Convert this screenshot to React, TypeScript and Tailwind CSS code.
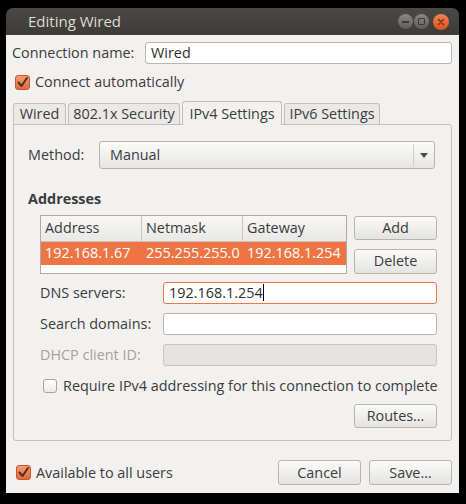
import React from "react";

const font = { fontFamily: '"Open Sans", "DejaVu Sans", sans-serif' };

function Check({ checked }: { checked: boolean }) {
  if (!checked) {
    return (
      <span className="w-[14px] h-[14px] rounded-[3px] border border-[#a8a5a0] bg-gradient-to-b from-[#ffffff] to-[#ecebe9] shrink-0" />
    );
  }
  return (
    <span className="w-[15px] h-[15px] rounded-[3px] border border-[#c4582b] bg-gradient-to-b from-[#f79a6e] to-[#e26a38] shrink-0 flex items-center justify-center">
      <svg width="13" height="13" viewBox="0 0 13 13">
        <path d="M2.5 6.5 L5.5 10 L11 2" fill="none" stroke="#4b3128" strokeWidth="2" strokeLinecap="round" strokeLinejoin="round" />
      </svg>
    </span>
  );
}

function Button({ label, className = "" }: { label: string; className?: string }) {
  return (
    <div
      className={
        "flex items-center justify-center rounded-[3px] border border-[#b8b5b0] bg-gradient-to-b from-[#fbfbfa] to-[#e4e3e1] text-[#3c3c3c] " +
        className
      }
    >
      {label}
    </div>
  );
}

function Field({ value = "", focus = false, disabled = false }: { value?: string; focus?: boolean; disabled?: boolean }) {
  const border = focus ? "border-[#e9794a]" : disabled ? "border-[#c8c5c0]" : "border-[#b9b6b1]";
  const bg = disabled ? "bg-[#e4e3e1]" : "bg-white";
  return (
    <div className={`flex-1 h-[22px] rounded-[3px] border ${border} ${bg} flex items-center px-[5px] text-[#2e2e2e]`}>
      {value}
      {focus && <span className="w-px h-[17px] bg-black" />}
    </div>
  );
}

function Tab({ label, w }: { label: string; w: string }) {
  return (
    <div className={`${w} h-[21px] flex items-center justify-center border border-b-0 border-[#c2bfba] rounded-t-[3px] bg-[#eae9e7]`}>
      {label}
    </div>
  );
}

export default function App() {
  return (
    <div className="w-[466px] h-[504px] bg-black pt-[8px] px-[6px] text-[14.4px] text-[#3c3c3c]" style={font}>
      <div className="w-[453px] h-[485px] rounded-t-[7px] overflow-hidden flex flex-col">
        {/* title bar */}
        <div className="h-[27px] bg-gradient-to-b from-[#4a4945] to-[#3c3b37] flex items-center pl-[22px] pr-[10px]">
          <span className="text-[#dfdbd2] text-[15px]">Editing Wired</span>
          <div className="ml-auto flex items-center gap-[1px]">
            <span className="w-[15px] h-[15px] rounded-full bg-gradient-to-b from-[#8a8882] to-[#5f5d57] flex items-center justify-center">
              <span className="w-[7px] h-[2px] bg-[#3c3b37]" />
            </span>
            <span className="w-[15px] h-[15px] rounded-full bg-gradient-to-b from-[#8a8882] to-[#5f5d57] flex items-center justify-center">
              <span className="w-[7px] h-[7px] border border-[#3c3b37] rounded-[1px]" />
            </span>
            <span className="ml-[3px] w-[16px] h-[16px] rounded-full bg-gradient-to-b from-[#f3834f] to-[#d9521f] flex items-center justify-center">
              <svg width="8" height="8" viewBox="0 0 8 8">
                <path d="M1.5 1.5 L6.5 6.5 M6.5 1.5 L1.5 6.5" stroke="#7a2a0e" strokeWidth="1.4" strokeLinecap="round" />
              </svg>
            </span>
          </div>
        </div>

        {/* content */}
        <div className="flex-1 bg-[#f2f1f0] pl-[6px] pr-[7px] flex flex-col">
          <div className="mt-[7px] h-[22px] flex items-center">
            <span className="w-[133px]">Connection name:</span>
            <Field value="Wired" />
          </div>

          <div className="mt-[10px] h-[16px] flex items-center gap-[5px] pl-[3px]">
            <Check checked />
            <span>Connect automatically</span>
          </div>

          {/* tabs */}
          <div className="mt-[11px] h-[23px] flex items-end pl-[1px] gap-[2px]">
            <Tab label="Wired" w="w-[53px]" />
            <Tab label="802.1x Security" w="w-[112px]" />
            <div className="w-[100px] h-[24px] -mb-px flex items-center justify-center border border-b-0 border-[#c2bfba] rounded-t-[3px] bg-[#f2f1f0] relative z-10">
              IPv4 Settings
            </div>
            <Tab label="IPv6 Settings" w="w-[96px]" />
          </div>

          {/* notebook frame */}
          <div className="ml-[1px] h-[317px] border border-[#c2bfba] rounded-b-[3px] rounded-tr-[3px] bg-[#f2f1f0] pl-[14px] pr-[14px] flex flex-col">
            <div className="mt-[16px] mr-[2px] h-[28px] flex items-center">
              <span className="w-[71px]">Method:</span>
              <div className="flex-1 h-[28px] rounded-[3px] border border-[#b8b5b0] bg-gradient-to-b from-[#fbfbfa] to-[#e6e5e3] flex items-center pl-[10px]">
                <span>Manual</span>
                <span className="ml-auto h-[22px] w-px bg-[#d2cfca]" />
                <span className="w-[20px] flex justify-center">
                  <svg width="8" height="5" viewBox="0 0 8 5">
                    <path d="M0 0 L8 0 L4 5 Z" fill="#4a4a4a" />
                  </svg>
                </span>
              </div>
            </div>

            <div className="mt-[19px] font-bold">Addresses</div>

            <div className="mt-[5px] pl-[12px] flex gap-[7px]">
              <div className="w-[307px] h-[59px] border border-[#aeaba6] bg-white flex flex-col">
                <div className="h-[26px] flex bg-gradient-to-b from-[#f7f7f6] to-[#e9e8e6] border-b border-[#c9c6c1]">
                  <div className="w-[101px] pl-[4px] flex items-center border-r border-[#c9c6c1]">Address</div>
                  <div className="w-[101px] pl-[4px] flex items-center border-r border-[#c9c6c1]">Netmask</div>
                  <div className="flex-1 pl-[4px] flex items-center">Gateway</div>
                </div>
                <div className="h-[23px] flex bg-[#ef7443] text-white">
                  <div className="w-[101px] pl-[4px] flex items-center">192.168.1.67</div>
                  <div className="w-[101px] pl-[4px] flex items-center">255.255.255.0</div>
                  <div className="flex-1 pl-[4px] flex items-center">192.168.1.254</div>
                </div>
              </div>
              <div className="flex flex-col gap-[9px] pt-[1px]">
                <Button label="Add" className="w-[83px] h-[24px]" />
                <Button label="Delete" className="w-[83px] h-[25px]" />
              </div>
            </div>

            <div className="mt-[8px] pl-[12px] flex flex-col gap-[9px]">
              <div className="h-[22px] flex items-center">
                <span className="w-[123px]">DNS servers:</span>
                <Field value="192.168.1.254" focus />
              </div>
              <div className="h-[22px] flex items-center">
                <span className="w-[123px]">Search domains:</span>
                <Field />
              </div>
              <div className="h-[22px] flex items-center">
                <span className="w-[123px] text-[#a3a19d]">DHCP client ID:</span>
                <Field disabled />
              </div>
            </div>

            <div className="mt-[12px] pl-[15px] h-[16px] flex items-center gap-[6px] whitespace-nowrap">
              <Check checked={false} />
              <span>Require IPv4 addressing for this connection to complete</span>
            </div>

            <div className="mt-[10px] flex justify-end">
              <Button label="Routes…" className="w-[83px] h-[24px]" />
            </div>
          </div>

          {/* bottom row */}
          <div className="mt-[19px] h-[25px] flex items-center">
            <div className="flex items-center gap-[5px] pl-[4px]">
              <Check checked />
              <span>Available to all users</span>
            </div>
            <div className="ml-auto flex gap-[8px]">
              <Button label="Cancel" className="w-[83px] h-[25px]" />
              <Button label="Save..." className="w-[83px] h-[25px]" />
            </div>
          </div>
        </div>
      </div>
    </div>
  );
}
